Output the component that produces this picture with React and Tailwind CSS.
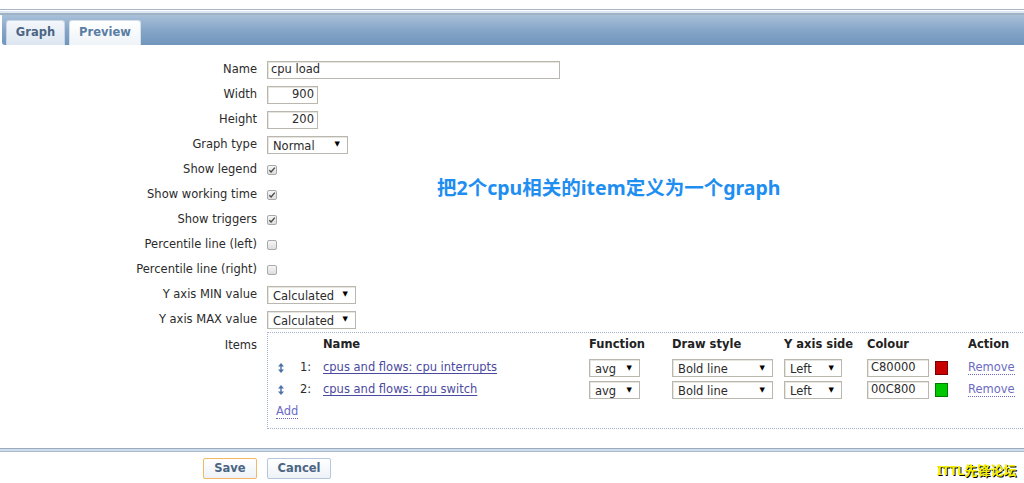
import React from 'react';

const Select = ({ value, className }) => (
  <div className={`flex h-[18px] items-center justify-between border border-[#b9b7ae] bg-white pl-[5px] pr-[7px] shadow-[inset_1px_1px_0_#e6e5df] ${className}`}>
    <span className="pt-[2px] leading-[14px]">{value}</span>
    <span className="text-[7px] leading-none text-black">▼</span>
  </div>
);

const Checkbox = ({ checked }) => (
  <div className="flex h-[10px] w-[10px] items-center justify-center rounded-[2px] border border-[#a9a9a9] bg-gradient-to-b from-[#f6f6f6] to-[#dedede]">
    {checked && (
      <svg width="8" height="8" viewBox="0 0 8 8">
        <path d="M1.3 4.2 L3.1 6 L6.8 1.6" fill="none" stroke="#4a4a4a" strokeWidth="1.4" />
      </svg>
    )}
  </div>
);

const SortArrow = () => (
  <svg width="6" height="10" viewBox="0 0 6 10">
    <path d="M3 0 L6 3.5 H0 Z M0 6.5 H6 L3 10 Z" fill="#4a72a8" />
    <rect x="2.3" y="3" width="1.4" height="4" fill="#4a72a8" />
  </svg>
);

const Row = ({ label, children, top }) => (
  <>
    <div className={`flex h-[25px] justify-end ${top ? 'items-start pt-[5px]' : 'items-center'}`}>{label}</div>
    <div className={`flex min-h-[25px] ${top ? 'items-start' : 'items-center'}`}>{children}</div>
  </>
);

const items = [
  { n: '1:', name: 'cpus and flows: cpu interrupts', colour: 'C80000', swatch: 'bg-[#c80000] border-[#7a0000]' },
  { n: '2:', name: 'cpus and flows: cpu switch', colour: '00C800', swatch: 'bg-[#00c800] border-[#007a00]' },
];

export default function App() {
  return (
    <div className="relative h-[483px] w-[1024px] overflow-hidden bg-white font-['DejaVu_Sans',sans-serif] text-[11.5px] text-[#2b2b2b]">
      {/* header with tabs */}
      <div className="pt-[9px]">
        <div className="h-px bg-[#a9b6c3]" />
        <div className="h-px bg-white" />
        <div className="h-[2px] bg-[#dbe6f0]" />
        <div className="h-[2px] bg-[#9fb2c6]" />
        <div className="ml-[2px] flex h-[30px] items-end gap-[4px] rounded-bl-[3px] bg-gradient-to-b from-[#a9c0d8] via-[#86a6c8] to-[#7095bc] pl-[4px]">
          <div className="flex h-[25px] w-[59px] items-center justify-center rounded-t-[3px] border border-b-0 border-[#c9d6e3] bg-gradient-to-b from-[#f4f7fb] to-[#dce6f0] font-bold text-[#4b6584]">
            Graph
          </div>
          <div className="flex h-[25px] w-[72px] items-center justify-center rounded-t-[3px] border border-b-0 border-[#d5e0ea] bg-gradient-to-b from-white to-[#eef3f8] font-bold text-[#5a7da4]">
            Preview
          </div>
        </div>
      </div>

      {/* form */}
      <div className="grid grid-cols-[257px_auto] gap-x-[10px] pt-[12px]">
        <Row label="Name">
          <div className="flex h-[18px] w-[293px] items-center border border-[#b9b7ae] pl-[3px] shadow-[inset_1px_1px_0_#e6e5df]">cpu load</div>
        </Row>
        <Row label="Width">
          <div className="flex h-[18px] w-[51px] items-center justify-end border border-[#b9b7ae] pr-[3px] shadow-[inset_1px_1px_0_#e6e5df]">900</div>
        </Row>
        <Row label="Height">
          <div className="flex h-[18px] w-[51px] items-center justify-end border border-[#b9b7ae] pr-[3px] shadow-[inset_1px_1px_0_#e6e5df]">200</div>
        </Row>
        <Row label="Graph type">
          <Select value="Normal" className="w-[81px]" />
        </Row>
        <Row label="Show legend"><Checkbox checked /></Row>
        <Row label="Show working time"><Checkbox checked /></Row>
        <Row label="Show triggers"><Checkbox checked /></Row>
        <Row label="Percentile line (left)"><Checkbox /></Row>
        <Row label="Percentile line (right)"><Checkbox /></Row>
        <Row label="Y axis MIN value">
          <Select value="Calculated" className="w-[89px]" />
        </Row>
        <Row label="Y axis MAX value">
          <Select value="Calculated" className="w-[89px]" />
        </Row>
        <Row label="Items" top>
          <div className="h-[97px] w-[800px] border border-dotted border-[#a3b2cf] pl-[8px]">
            <div className="grid grid-cols-[47px_266px_83px_112px_83px_68px_33px_80px] items-center">
              <div className="h-[24px]" />
              <div className="font-bold text-[#222]">Name</div>
              <div className="font-bold text-[#222]">Function</div>
              <div className="font-bold text-[#222]">Draw style</div>
              <div className="font-bold text-[#222]">Y axis side</div>
              <div className="font-bold text-[#222]">Colour</div>
              <div />
              <div className="font-bold text-[#222]">Action</div>

              {items.map((it) => (
                <React.Fragment key={it.n}>
                  <div className="flex h-[22px] items-center">
                    <div className="ml-[2px] w-[22px]"><SortArrow /></div>
                    <span>{it.n}</span>
                  </div>
                  <div>
                    <span className="text-[#4a4aa0] underline decoration-[#4a4aa0] underline-offset-2">{it.name}</span>
                  </div>
                  <Select value="avg" className="w-[51px]" />
                  <Select value="Bold line" className="w-[101px]" />
                  <Select value="Left" className="w-[58px]" />
                  <div className="flex h-[18px] w-[62px] items-center border border-[#b9b7ae] pl-[3px] shadow-[inset_1px_1px_0_#e6e5df]">{it.colour}</div>
                  <div className={`h-[14px] w-[13px] border ${it.swatch}`} />
                  <div>
                    <span className="border-b border-dotted border-[#6b6bc4] text-[#6b6bc4]">Remove</span>
                  </div>
                </React.Fragment>
              ))}
            </div>
            <div className="flex h-[22px] items-center">
              <span className="border-b border-dotted border-[#6b6bc4] leading-[13px] text-[#6b6bc4]">Add</span>
            </div>
          </div>
        </Row>
      </div>

      {/* footer */}
      <div className="mt-[19px]">
        <div className="h-px bg-[#9aacbf]" />
        <div className="h-[2px] bg-[#cfdcea]" />
        <div className="h-px bg-[#a8bacb]" />
      </div>
      <div className="mt-[6px] grid grid-cols-[257px_auto] gap-x-[10px]">
        <div className="flex justify-end">
          <div className="flex h-[21px] w-[54px] items-center justify-center rounded-[2px] border border-[#f4b766] bg-gradient-to-b from-white to-[#eef2f7] font-bold text-[#4b6584]">Save</div>
        </div>
        <div>
          <div className="flex h-[21px] w-[64px] items-center justify-center rounded-[2px] border border-[#b4c7dc] bg-gradient-to-b from-white to-[#eef2f7] font-bold text-[#4b6584]">Cancel</div>
        </div>
      </div>

      {/* annotation */}
      <div className="absolute left-[437px] top-[175px] font-['Noto_Sans','Noto_Sans_CJK_SC',sans-serif] text-[19.5px] font-bold leading-[26px] text-[#1f8ef1]">
        把2个cpu相关的item定义为一个graph
      </div>

      {/* watermark */}
      <div className="absolute left-[937px] top-[462px] font-['Noto_Sans','Noto_Sans_CJK_SC',sans-serif] text-[13px] font-bold leading-[16px] text-[#f4f000] [text-shadow:1px_1px_0_#000]">
        ITTL先锋论坛
      </div>
    </div>
  );
}
